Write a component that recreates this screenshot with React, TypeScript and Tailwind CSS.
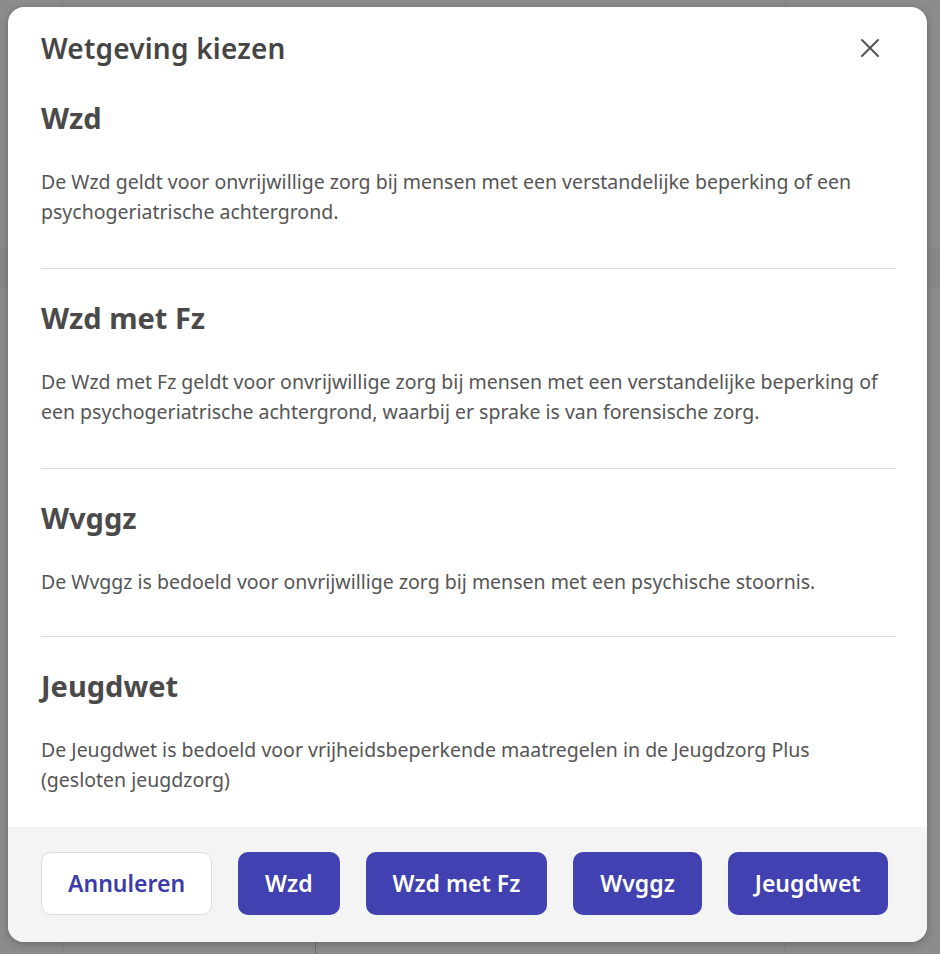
import React from "react";

const sections = [
  {
    title: "Wzd",
    lines: [
      "De Wzd geldt voor onvrijwillige zorg bij mensen met een verstandelijke beperking of een",
      "psychogeriatrische achtergrond.",
    ],
  },
  {
    title: "Wzd met Fz",
    lines: [
      "De Wzd met Fz geldt voor onvrijwillige zorg bij mensen met een verstandelijke beperking of",
      "een psychogeriatrische achtergrond, waarbij er sprake is van forensische zorg.",
    ],
  },
  {
    title: "Wvggz",
    lines: ["De Wvggz is bedoeld voor onvrijwillige zorg bij mensen met een psychische stoornis."],
  },
  {
    title: "Jeugdwet",
    lines: [
      "De Jeugdwet is bedoeld voor vrijheidsbeperkende maatregelen in de Jeugdzorg Plus",
      "(gesloten jeugdzorg)",
    ],
  },
];

export default function App() {
  return (
    <div
      className="relative w-[940px] h-[954px] overflow-hidden bg-[#8c8c8c]"
      style={{ fontFamily: '"Noto Sans", "Open Sans", sans-serif' }}
    >
      {/* faint backdrop content */}
      <div className="absolute left-[62px] top-0 w-px h-[954px] bg-[#7f7f7f]" />
      <div className="absolute left-[785px] top-0 w-px h-[954px] bg-[#7f7f7f]" />
      <div className="absolute left-0 top-[248px] w-[940px] h-[40px] bg-[#878787]" />
      <div className="absolute left-[315px] top-[942px] w-px h-[12px] bg-[#6f6f6f]" />

      <div className="absolute left-[8px] top-[7px] w-[919px] h-[935px] bg-white rounded-[16px] overflow-hidden shadow-[0_2px_8px_rgba(0,0,0,0.25)] flex flex-col">
        <div className="flex items-center justify-between pl-[33px] pr-[47px] pt-[24px]">
          <h1 className="text-[28px] leading-[34px] font-semibold text-[#454545] tracking-[0.2px]">
            Wetgeving kiezen
          </h1>
          <svg width="20" height="20" viewBox="0 0 20 20" className="text-[#555]">
            <path d="M2 2 L18 18 M18 2 L2 18" stroke="currentColor" strokeWidth="2" strokeLinecap="round" />
          </svg>
        </div>

        <div className="flex-1 pl-[33px] pr-[31px] pt-[36px]">
          {sections.map((s, i) => (
            <div key={s.title}>
              {i > 0 && <div className={`h-px bg-[#dddddd] mb-[32px] ${i === 3 ? "mt-[39px]" : "mt-[41px]"}`} />}
              <h2 className="text-[29px] leading-[34px] font-bold text-[#4a4a4a]">{s.title}</h2>
              <p className="mt-[32px] text-[19.5px] leading-[30px] text-[#555555] whitespace-nowrap">
                {s.lines.map((l, j) => (
                  <React.Fragment key={j}>
                    {j > 0 && <br />}
                    {l}
                  </React.Fragment>
                ))}
              </p>
            </div>
          ))}
        </div>

        <div className="h-[115px] bg-[#f4f4f4] flex items-center gap-[26px] pl-[33px] pr-[20px] pb-[2px]">
          <button className="shrink-0 whitespace-nowrap h-[63px] px-[26px] rounded-[10px] border border-[#dcdcdc] bg-white text-[23px] font-semibold text-[#3b3bab]">
            Annuleren
          </button>
          {["Wzd", "Wzd met Fz", "Wvggz", "Jeugdwet"].map((b) => (
            <button
              key={b}
              className="shrink-0 whitespace-nowrap h-[63px] px-[27px] rounded-[10px] bg-[#4141b1] text-[23px] font-semibold text-white"
            >
              {b}
            </button>
          ))}
        </div>
      </div>
    </div>
  );
}
